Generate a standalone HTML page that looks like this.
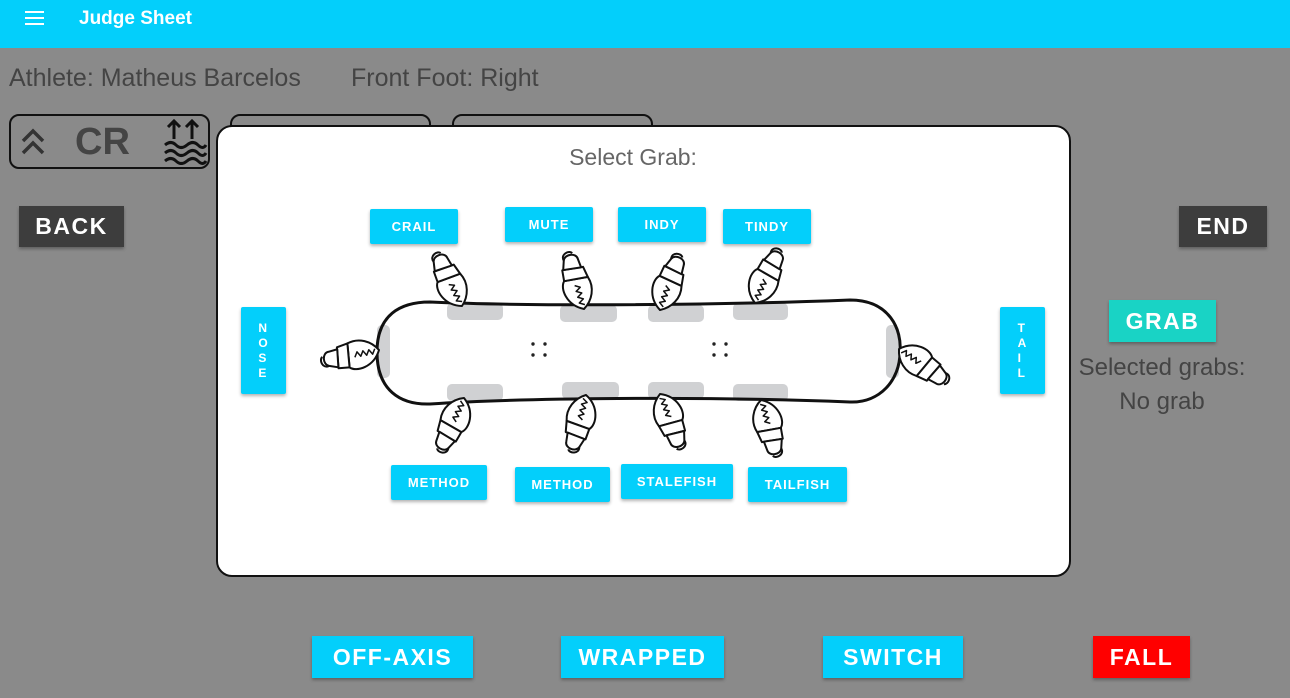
<!DOCTYPE html>
<html><head><meta charset="utf-8"><style>
*{margin:0;padding:0;box-sizing:border-box}
body{width:1290px;height:698px;background:#8a8a8a;font-family:"Liberation Sans",sans-serif;position:relative;overflow:hidden}
.abs{position:absolute}
.hdr{left:0;top:0;width:1290px;height:48px;background:#03cffb}
.t{color:#444;font-size:24px}
.btn{position:absolute;color:#fff;font-weight:bold;display:flex;align-items:center;justify-content:center;letter-spacing:1.5px;box-shadow:0 2px 3px rgba(0,0,0,.3)}
.dk{background:#3d3d3d;font-size:23px}
.cy{background:#03cffb;font-size:23px}
.g{background:#03cffb;font-size:13px;letter-spacing:1px;border-radius:2px}
.box{border:2px solid #111;border-radius:10px;height:55px;width:201px;top:114px}
</style></head><body>
<div class="abs hdr"></div>
<div class="abs" style="left:25px;top:11px;width:19px;height:14px;border-top:2px solid #fff;border-bottom:2px solid #fff"><div style="margin-top:4px;height:2px;background:#fff"></div></div>
<div class="abs" style="left:79px;top:8px;color:#fff;font-size:19px;font-weight:bold">Judge Sheet</div>
<div class="abs t" style="left:9px;top:64px;font-size:25px">Athlete: Matheus Barcelos</div>
<div class="abs t" style="left:351px;top:64px;font-size:25px">Front Foot: Right</div>
<div class="abs box" style="left:9px"></div>
<svg class="abs" style="left:20px;top:127px" width="28" height="30"><g stroke="#333" stroke-width="3.5" fill="none"><path d="M3 14l10-10 10 10M3 26l10-10 10 10"/></g></svg>
<div class="abs" style="left:75px;top:121px;font-size:38px;color:#444;font-weight:bold">CR</div>
<svg class="abs" style="left:162px;top:117px" width="46" height="48"><g stroke="#111" stroke-width="3" fill="none"><path d="M12 22V4M6 10l6-6 6 6M30 22V4M24 10l6-6 6 6"/><path d="M3 28q6-5 11 0t11 0 11 0 8 0M3 36q6-5 11 0t11 0 11 0 8 0M3 44q6-5 11 0t11 0 11 0 8 0"/></g></svg>
<div class="abs box" style="left:230px"></div>
<div class="abs box" style="left:452px"></div>
<div class="btn dk" style="left:19px;top:206px;width:105px;height:41px">BACK</div>
<div class="btn dk" style="left:1179px;top:206px;width:88px;height:41px">END</div>
<div class="btn" style="left:1109px;top:300px;width:107px;height:42px;background:#19d3c5;font-size:23px">GRAB</div>
<div class="abs t" style="left:1062px;top:354px;width:200px;text-align:center">Selected grabs:</div>
<div class="abs t" style="left:1062px;top:388px;width:200px;text-align:center">No grab</div>
<div class="btn cy" style="left:312px;top:636px;width:161px;height:42px">OFF-AXIS</div>
<div class="btn cy" style="left:561px;top:636px;width:163px;height:42px">WRAPPED</div>
<div class="btn cy" style="left:823px;top:636px;width:140px;height:42px">SWITCH</div>
<div class="btn" style="left:1093px;top:636px;width:97px;height:42px;background:#ff0000;font-size:23px">FALL</div>

<div class="abs" style="left:216px;top:125px;width:855px;height:452px;background:#fff;border:2px solid #111;border-radius:16px"></div>
<div class="abs" style="left:533px;top:144px;width:200px;text-align:center;font-size:23px;color:#666">Select Grab:</div>
<svg class="abs" style="left:0;top:0" width="1290" height="698">
<defs>
<g id="h" stroke="#111" stroke-width="2" fill="#fff" stroke-linejoin="round">
<path d="M0 0C-16-8-18-26-12-32L12-30C16-18 10-6 0 0Z"/>
<path d="M2-4l-5-3 5-3-5-3 5-3-5-3 5-3-5-3" fill="none" stroke-width="1.5"/>
<path d="M-12-32L12-30 10-41-11-43Z"/>
<path d="M-10-43L8-41 7-50C7-57-5-58-7-52Z"/>
<path d="M-7-52C-9-59 1-61 3-57" fill="none"/>
</g>
</defs>
<g fill="#d0d1d3">
<rect x="447" y="303" width="56" height="17" rx="5"/><rect x="560" y="305" width="57" height="17" rx="5"/><rect x="648" y="305" width="56" height="17" rx="5"/><rect x="733" y="303" width="55" height="17" rx="5"/>
<rect x="447" y="384" width="56" height="17" rx="5"/><rect x="562" y="382" width="57" height="17" rx="5"/><rect x="648" y="382" width="56" height="17" rx="5"/><rect x="733" y="384" width="55" height="17" rx="5"/>
<rect x="377" y="325" width="13" height="53" rx="5"/><rect x="886" y="325" width="13" height="53" rx="5"/>
</g>
<path d="M430 302C520 306 700 306 850 300C890 300 902 330 900 352C900 380 880 403 850 402C700 396 520 398 430 404C400 405 377 390 377 352C377 315 400 302 430 302Z" fill="none" stroke="#111" stroke-width="3"/>
<g fill="#222"><circle cx="533" cy="344" r="1.7"/><circle cx="545" cy="344" r="1.7"/><circle cx="533" cy="355" r="1.7"/><circle cx="545" cy="355" r="1.7"/><circle cx="714" cy="344" r="1.7"/><circle cx="726" cy="344" r="1.7"/><circle cx="714" cy="355" r="1.7"/><circle cx="726" cy="355" r="1.7"/></g>
<use href="#h" transform="translate(462 306) rotate(-25)"/>
<use href="#h" transform="translate(584 309) rotate(-15)"/>
<use href="#h" transform="translate(660 310) rotate(20)"/>
<use href="#h" transform="translate(755 303) rotate(25)"/>
<use href="#h" transform="translate(464 398) rotate(205)"/>
<use href="#h" transform="translate(586 395) rotate(195)"/>
<use href="#h" transform="translate(660 394) rotate(160)"/>
<use href="#h" transform="translate(761 400) rotate(165)"/>
<use href="#h" transform="translate(379 350) rotate(-100)"/>
<use href="#h" transform="translate(899 349) rotate(125)"/>
</svg>
<div class="btn g" style="left:370px;top:209px;width:88px;height:35px">CRAIL</div>
<div class="btn g" style="left:505px;top:207px;width:88px;height:35px">MUTE</div>
<div class="btn g" style="left:618px;top:207px;width:88px;height:35px">INDY</div>
<div class="btn g" style="left:723px;top:209px;width:88px;height:35px">TINDY</div>
<div class="btn g" style="left:391px;top:465px;width:96px;height:35px">METHOD</div>
<div class="btn g" style="left:515px;top:467px;width:95px;height:35px">METHOD</div>
<div class="btn g" style="left:621px;top:464px;width:112px;height:35px">STALEFISH</div>
<div class="btn g" style="left:748px;top:467px;width:99px;height:35px">TAILFISH</div>
<div class="btn g" style="left:241px;top:307px;width:45px;height:87px;flex-direction:column;line-height:15px;font-size:12px">N<br>O<br>S<br>E</div>
<div class="btn g" style="left:1000px;top:307px;width:45px;height:87px;flex-direction:column;line-height:15px;font-size:12px">T<br>A<br>I<br>L</div>
</body></html>
